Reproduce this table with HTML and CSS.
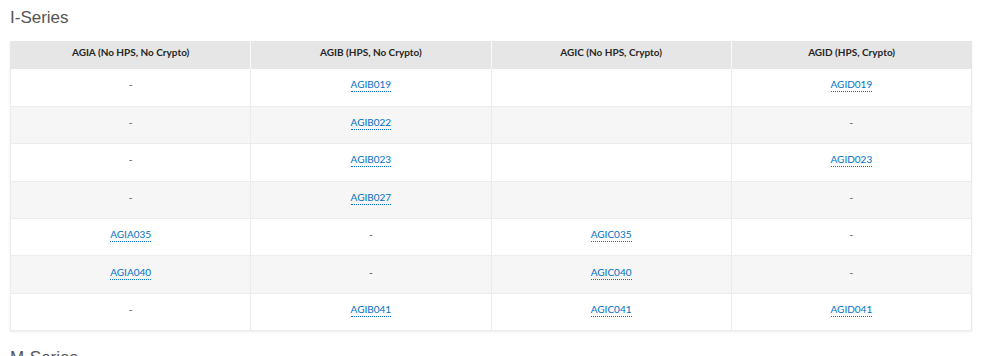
FILE: index.html
```html
<!DOCTYPE html>
<html>
<head>
<meta charset="utf-8">
<link rel="stylesheet" href="styles.css">
</head>
<body>
<h2 class="series-title">I-Series</h2>
<table class="spec-table">
  <thead>
    <tr>
      <th>AGIA (No HPS, No Crypto)</th>
      <th>AGIB (HPS, No Crypto)</th>
      <th>AGIC (No HPS, Crypto)</th>
      <th>AGID (HPS, Crypto)</th>
    </tr>
  </thead>
  <tbody>
    <tr><td>-</td><td><a class="part" href="#">AGIB019</a></td><td></td><td><a class="part" href="#">AGID019</a></td></tr>
    <tr><td>-</td><td><a class="part" href="#">AGIB022</a></td><td></td><td>-</td></tr>
    <tr><td>-</td><td><a class="part" href="#">AGIB023</a></td><td></td><td><a class="part" href="#">AGID023</a></td></tr>
    <tr><td>-</td><td><a class="part" href="#">AGIB027</a></td><td></td><td>-</td></tr>
    <tr><td><a class="part" href="#">AGIA035</a></td><td>-</td><td><a class="part" href="#">AGIC035</a></td><td>-</td></tr>
    <tr><td><a class="part" href="#">AGIA040</a></td><td>-</td><td><a class="part" href="#">AGIC040</a></td><td>-</td></tr>
    <tr><td>-</td><td><a class="part" href="#">AGIB041</a></td><td><a class="part" href="#">AGIC041</a></td><td><a class="part" href="#">AGID041</a></td></tr>
  </tbody>
</table>
<h2 class="series-title next">M-Series</h2>
</body>
</html>
```
FILE: styles.css
```css
html, body {
  margin: 0;
  padding: 0;
  background: #fff;
}
body {
  padding: 0 10px;
  font-family: "Lato", "Open Sans", sans-serif;
  color: #333;
}
.series-title {
  margin: 0;
  padding-top: 7px;
  height: 41px;
  box-sizing: border-box;
  font-family: "Liberation Sans", Arial, sans-serif;
  font-weight: 400;
  font-size: 17px;
  line-height: 22px;
  color: #555;
}
.series-title.next {
  margin-top: 16px;
  padding-top: 0;
}
.spec-table {
  width: 962px;
  border-collapse: collapse;
  table-layout: fixed;
  font-size: 10px;
  box-shadow: 0 1px 2px rgba(0,0,0,0.08);
}
.spec-table th {
  background: #e6e6e6;
  font-weight: 700;
  color: #262626;
  height: 22px;
  padding: 0 8px 6px;
  border-left: 1px solid #fafafa;
  text-align: center;
  vertical-align: middle;
}
.spec-table th:first-child { border-left: 1px solid #e6e6e6; }
.spec-table td {
  height: 37.4px;
  box-sizing: border-box;
  padding: 0 8px 6px;
  text-align: center;
  vertical-align: middle;
  border: 1px solid #ececec;
  border-top: none;
  color: #444;
}
.spec-table tbody tr:nth-child(even) td {
  background: #f6f6f6;
}
.part {
  color: #0071c5;
  text-decoration: none;
  border-bottom: 1px dotted #0071c5;
  padding-bottom: 1px;
}
```
